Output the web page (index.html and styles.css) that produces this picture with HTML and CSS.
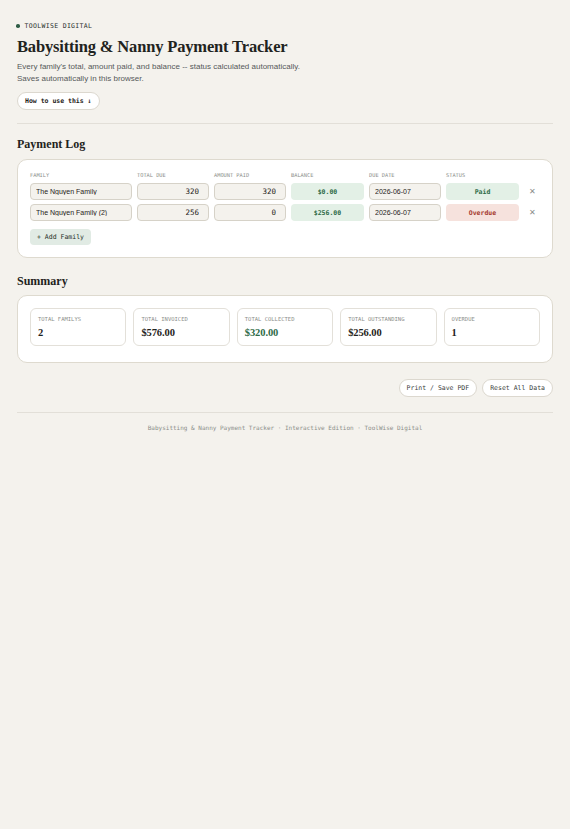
FILE: index.html
```html
<!DOCTYPE html>
<html lang="en">
<head>
  <meta charset="UTF-8">
  <meta name="viewport" content="width=device-width, initial-scale=1">
  <title>Babysitting &amp; Nanny Payment Tracker</title>
  <link rel="stylesheet" href="styles.css">
</head>
<body>
  <header class="top">
    <div class="brand"><span class="dot"></span>TOOLWISE DIGITAL</div>
    <h1>Babysitting &amp; Nanny Payment Tracker</h1>
    <p class="lead">Every family's total, amount paid, and balance -- status calculated automatically.<br>Saves automatically in this browser.</p>
    <button class="pill">How to use this &#8595;</button>
  </header>

  <hr>

  <h2>Payment Log</h2>
  <section class="card">
    <div class="log">
      <div class="head">Family</div>
      <div class="head">Total Due</div>
      <div class="head">Amount Paid</div>
      <div class="head">Balance</div>
      <div class="head">Due Date</div>
      <div class="head">Status</div>
      <div></div>

      <input class="field" type="text" value="The Nguyen Family">
      <input class="field num" type="text" value="320">
      <input class="field num" type="text" value="320">
      <div class="badge ok">$0.00</div>
      <input class="field" type="text" value="2026-06-07">
      <div class="badge ok">Paid</div>
      <button class="del">&#10005;</button>

      <input class="field" type="text" value="The Nguyen Family (2)">
      <input class="field num" type="text" value="256">
      <input class="field num" type="text" value="0">
      <div class="badge ok">$256.00</div>
      <input class="field" type="text" value="2026-06-07">
      <div class="badge late">Overdue</div>
      <button class="del">&#10005;</button>
    </div>
    <button class="add">+ Add Family</button>
  </section>

  <h2>Summary</h2>
  <section class="card summary">
    <div class="stats">
      <div class="stat"><div class="label">Total Familys</div><div class="value">2</div></div>
      <div class="stat"><div class="label">Total Invoiced</div><div class="value">$576.00</div></div>
      <div class="stat"><div class="label">Total Collected</div><div class="value green">$320.00</div></div>
      <div class="stat"><div class="label">Total Outstanding</div><div class="value">$256.00</div></div>
      <div class="stat"><div class="label">Overdue</div><div class="value">1</div></div>
    </div>
  </section>

  <div class="actions">
    <button class="pill light">Print / Save PDF</button>
    <button class="pill light">Reset All Data</button>
  </div>

  <hr class="foot-rule">

  <footer>Babysitting &amp; Nanny Payment Tracker · Interactive Edition · ToolWise Digital</footer>
</body>
</html>
```

FILE: styles.css
```css
body {
  margin: 0;
  padding: 22px 17px 30px;
  background: #f4f2ed;
  color: #1f2320;
  font-family: 'Liberation Sans', Arial, sans-serif;
}
.brand {
  display: flex;
  align-items: center;
  gap: 5px;
  font-family: 'DejaVu Sans Mono', monospace;
  font-size: 6.5px;
  letter-spacing: 0.05em;
  color: #2b312d;
}
.dot {
  width: 3.5px;
  height: 3.5px;
  border-radius: 50%;
  background: #2f5d46;
  margin-left: -1px;
}
h1 {
  font-family: 'Liberation Serif', 'Times New Roman', serif;
  font-size: 16.5px;
  letter-spacing: -0.01em;
  margin: 7px 0 4px;
}
.lead {
  font-size: 8px;
  line-height: 12px;
  color: #55595a;
  margin: 0 0 4px;
}
.pill {
  font-family: 'DejaVu Sans Mono', monospace;
  font-size: 6.5px;
  font-weight: bold;
  color: #1f2320;
  background: #fff;
  border: 1px solid #dcd8cf;
  border-radius: 10px;
  padding: 0 7px;
  height: 18px;
}
hr {
  border: none;
  border-top: 1px solid #e2dfd8;
  margin: 13px 0 0;
}
.foot-rule {
  margin-top: 15px;
}
h2 {
  font-family: 'Liberation Serif', 'Times New Roman', serif;
  font-size: 12px;
  margin: 16px 0 6px;
}
hr + h2 {
  margin-top: 13px;
  margin-bottom: 7px;
}
.card {
  background: #fff;
  border: 1px solid #dedacf;
  border-radius: 10px;
  padding: 12px 12px;
}
.summary {
  padding: 12px 12px 16px;
}
.log {
  display: grid;
  grid-template-columns: 102px 72px 72px 73px 72px 73px 1fr;
  column-gap: 5px;
  row-gap: 4px;
  align-items: center;
}
.head {
  font-family: 'DejaVu Sans Mono', monospace;
  font-size: 5.3px;
  text-transform: uppercase;
  color: #8b8e8a;
  height: 8px;
  margin-bottom: -1px;
}
.field {
  box-sizing: border-box;
  height: 17px;
  width: 100%;
  margin: 0;
  padding: 0 5px;
  background: #f4f2ed;
  border: 1px solid #d6d2c8;
  border-radius: 4px;
  font-family: 'Liberation Sans', Arial, sans-serif;
  font-size: 7px;
  color: #1f2320;
}
.num {
  text-align: right;
  font-family: 'DejaVu Sans Mono', monospace;
  font-size: 7.5px;
  padding-right: 9px;
}
.badge {
  height: 17px;
  border-radius: 4px;
  display: flex;
  align-items: center;
  justify-content: center;
  font-family: 'DejaVu Sans Mono', monospace;
  font-size: 6.5px;
  font-weight: bold;
}
.ok {
  background: #e3f0e6;
  color: #2e6b47;
}
.late {
  background: #f6e2dd;
  color: #a53a2f;
}
.del {
  border: none;
  background: none;
  color: #8a8d89;
  font-size: 8px;
  padding: 0;
  width: 16px;
}
.add {
  margin-top: 8px;
  height: 16px;
  padding: 0 7px;
  border: none;
  border-radius: 4px;
  background: #e1ebe4;
  color: #263029;
  font-family: 'DejaVu Sans Mono', monospace;
  font-size: 6.5px;
}
.stats {
  display: grid;
  grid-template-columns: repeat(5, 1fr);
  gap: 7px;
}
.stat {
  border: 1px solid #e3e0d9;
  border-radius: 6px;
  padding: 7px 7px 7px;
}
.label {
  font-family: 'DejaVu Sans Mono', monospace;
  font-size: 5.5px;
  text-transform: uppercase;
  color: #8b8e8a;
}
.value {
  font-family: 'Liberation Serif', 'Times New Roman', serif;
  font-weight: bold;
  font-size: 10.5px;
  letter-spacing: -0.01em;
  margin-top: 5px;
}
.green {
  color: #2e6b47;
}
.actions {
  display: flex;
  justify-content: flex-end;
  gap: 5px;
  margin-top: 16px;
}
.light {
  font-weight: normal;
  color: #3a3e3b;
}
footer {
  text-align: center;
  font-family: 'DejaVu Sans Mono', monospace;
  font-size: 6px;
  color: #8b8e8a;
  margin-top: 11px;
}
```
